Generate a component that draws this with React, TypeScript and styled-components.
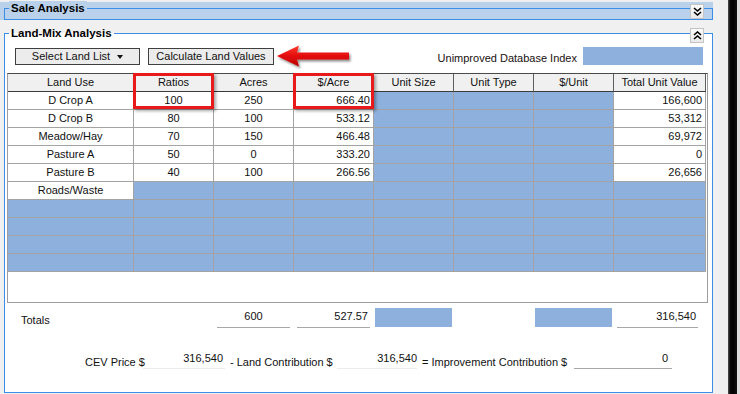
import React from "react";
import styled, { createGlobalStyle } from "styled-components";

const GlobalStyle = createGlobalStyle`
  html, body {
    margin: 0;
    padding: 0;
    background: #f0f0f0;
    overflow: hidden;
  }
  body {
    font-family: "Liberation Sans", Arial, sans-serif;
    font-size: 11px;
    color: #111;
  }
  * { box-sizing: border-box; }
`;

const Page = styled.div`
  display: flex;
  width: 100vw;
  height: 100vh;
  overflow: hidden;
  background: #f0f0f0;
`;

const Main = styled.div`
  flex: 0 1 728px;
  min-width: 0;
  display: flex;
  flex-direction: column;
`;

const ShadowEdge = styled.div`
  flex: none;
  width: 12px;
  display: flex;
`;

const EdgeBlack = styled.div`
  flex: 1;
  background: linear-gradient(to right, #555 0px, #0a0a0a 2px, #000 5px, #111 100%);
`;

const EdgeLight = styled.div`
  width: 3px;
  flex: none;
  background: #dcdcdc;
`;

const SaleBar = styled.div`
  margin-top: 2px;
  width: 713px;
  height: 18px;
  background: #b9d1ea;
  padding: 6px 0 0 4px;
`;

const SaleFrame = styled.div`
  position: relative;
  width: 709px;
  height: 12px;
  border: 1px solid #3c8de6;
`;

const Legend = styled.span<{ $bg: string }>`
  position: absolute;
  top: -8px;
  left: 4px;
  padding: 0 2px;
  font-weight: bold;
  font-size: 11.5px;
  line-height: 14px;
  color: #000;
  background: ${(p) => p.$bg};
`;

const Collapser = styled.div<{ $top: number }>`
  position: absolute;
  top: ${(p) => p.$top}px;
  right: 8px;
  width: 14px;
  height: 15px;
  border: 1px solid #c4c4c4;
  background: linear-gradient(#fbfbfb, #e9e9e9);
  display: flex;
  align-items: center;
  justify-content: center;
`;

const LandFrame = styled.div`
  position: relative;
  margin: 13px 0 0 4px;
  width: 709px;
  height: 360px;
  flex: none;
  border: 1px solid #3c8de6;
  background: #fff;
  display: flex;
  flex-direction: column;
`;

const Toolbar = styled.div`
  margin-top: 13px;
  height: 18px;
  padding: 0 9px 0 10px;
  display: flex;
  align-items: center;
`;

const ToolButton = styled.div<{ $w: number; $gap: number }>`
  width: ${(p) => p.$w}px;
  height: 17px;
  margin-left: ${(p) => p.$gap}px;
  border: 1px solid #3f3f3f;
  background: #ececec;
  display: flex;
  align-items: center;
  justify-content: center;
  gap: 7px;
  font-size: 11px;
  color: #111;
  white-space: nowrap;
`;

const Caret = styled.span`
  width: 0;
  height: 0;
  border-left: 3.5px solid transparent;
  border-right: 3.5px solid transparent;
  border-top: 4px solid #111;
  margin-top: 1px;
`;

const ArrowSvg = styled.svg`
  margin-left: 2px;
  flex: none;
  overflow: visible;
`;

const Spacer = styled.div`
  flex: 1;
`;

const IndexLabel = styled.span`
  align-self: flex-end;
  line-height: 13px;
  margin-right: 6px;
  color: #1a1010;
  white-space: nowrap;
`;

const BlueBox = styled.div<{ $w: number; $h: number }>`
  width: ${(p) => p.$w}px;
  height: ${(p) => p.$h}px;
  background: #8eb0dd;
  flex: none;
`;

const TableWrap = styled.div`
  position: relative;
  margin: 8px 0 0 2px;
  width: 701px;
  height: 230px;
  flex: none;
  border: 1px solid #9c9c9c;
  border-top-color: #4a4a4a;
  background: #fff;
`;

const Grid = styled.div`
  display: grid;
  grid-template-columns: 126px 80px 80px 80px 80px 80px 80px 92px;
  grid-auto-rows: 18px;
`;

const HeadCell = styled.div`
  background: #f0f0f0;
  border-right: 1px solid #5e5e5e;
  border-bottom: 1px solid #3a3a3a;
  display: flex;
  align-items: center;
  justify-content: center;
  line-height: 17px;
  color: #111;
  white-space: nowrap;
`;

const Cell = styled.div<{ $blue?: boolean; $align: "center" | "right" }>`
  background: ${(p) => (p.$blue ? "#8eb0dd" : "#fff")};
  border-right: 1px solid #a3a3a3;
  border-bottom: 1px solid #a3a3a3;
  display: flex;
  align-items: center;
  justify-content: ${(p) => (p.$align === "right" ? "flex-end" : "center")};
  padding-right: ${(p) => (p.$align === "right" ? "3px" : "0")};
  line-height: 17px;
  color: #111;
  white-space: nowrap;
`;

const Highlight = styled.div<{ $left: number }>`
  position: absolute;
  top: -1px;
  left: ${(p) => p.$left}px;
  width: 81px;
  height: 36px;
  border: 3px solid #e8191b;
  box-shadow: 2px 2px 3px rgba(0, 0, 0, 0.35);
  pointer-events: none;
`;

const TotalsRow = styled.div`
  margin-top: 5px;
  height: 20px;
  padding-left: 16px;
  display: flex;
  align-items: stretch;
`;

const TotalsLabel = styled.span`
  width: 196px;
  display: flex;
  align-items: flex-end;
  padding-bottom: 2px;
  color: #111;
`;

const Field = styled.div<{
  $w: number;
  $gap: number;
  $line: string;
  $align: "center" | "right";
  $pad: number;
}>`
  width: ${(p) => p.$w}px;
  margin-left: ${(p) => p.$gap}px;
  border-bottom: 1px solid ${(p) => p.$line};
  display: flex;
  align-items: center;
  justify-content: ${(p) => (p.$align === "right" ? "flex-end" : "center")};
  padding-right: ${(p) => p.$pad}px;
  padding-bottom: 3px;
  color: #111;
  flex: none;
  white-space: nowrap;
`;

const TotalsBlue = styled.div<{ $gap: number }>`
  width: 77px;
  height: 19px;
  margin-left: ${(p) => p.$gap}px;
  background: #8eb0dd;
  flex: none;
`;

const CevRow = styled.div`
  margin-top: 23px;
  height: 18px;
  padding-left: 80px;
  display: flex;
  align-items: stretch;
`;

const CevLabel = styled.span<{ $w: number; $gap: number }>`
  width: ${(p) => p.$w}px;
  margin-left: ${(p) => p.$gap}px;
  display: flex;
  align-items: flex-end;
  line-height: 13px;
  color: #111;
  white-space: nowrap;
  flex: none;
`;

const chevronDown = (
  <svg width="9" height="9" viewBox="0 0 9 9">
    <polyline points="1,1 4.5,4 8,1" fill="none" stroke="#000" strokeWidth="1.6" />
    <polyline points="1,5 4.5,8 8,5" fill="none" stroke="#000" strokeWidth="1.6" />
  </svg>
);

const chevronUp = (
  <svg width="9" height="9" viewBox="0 0 9 9">
    <polyline points="1,4 4.5,1 8,4" fill="none" stroke="#000" strokeWidth="1.6" />
    <polyline points="1,8 4.5,5 8,8" fill="none" stroke="#000" strokeWidth="1.6" />
  </svg>
);

type Row = {
  use: string;
  ratio?: string;
  acres?: string;
  per?: string;
  total?: string;
  kind: "data" | "roads" | "empty";
};

const rows: Row[] = [
  { use: "D Crop A", ratio: "100", acres: "250", per: "666.40", total: "166,600", kind: "data" },
  { use: "D Crop B", ratio: "80", acres: "100", per: "533.12", total: "53,312", kind: "data" },
  { use: "Meadow/Hay", ratio: "70", acres: "150", per: "466.48", total: "69,972", kind: "data" },
  { use: "Pasture A", ratio: "50", acres: "0", per: "333.20", total: "0", kind: "data" },
  { use: "Pasture B", ratio: "40", acres: "100", per: "266.56", total: "26,656", kind: "data" },
  { use: "Roads/Waste", kind: "roads" },
  { use: "", kind: "empty" },
  { use: "", kind: "empty" },
  { use: "", kind: "empty" },
  { use: "", kind: "empty" },
];

const headers = ["Land Use", "Ratios", "Acres", "$/Acre", "Unit Size", "Unit Type", "$/Unit", "Total Unit Value"];

function TableRow({ r }: { r: Row }) {
  const data = r.kind === "data";
  const empty = r.kind === "empty";
  return (
    <>
      <Cell $align="center" $blue={empty}>{r.use}</Cell>
      <Cell $align="center" $blue={!data}>{r.ratio}</Cell>
      <Cell $align="center" $blue={!data}>{r.acres}</Cell>
      <Cell $align="right" $blue={!data}>{r.per}</Cell>
      <Cell $align="center" $blue />
      <Cell $align="center" $blue />
      <Cell $align="center" $blue />
      <Cell $align="right" $blue={!data}>{r.total}</Cell>
    </>
  );
}

export default function App() {
  return (
    <>
      <GlobalStyle />
      <Page>
        <Main>
          <SaleBar>
            <SaleFrame>
              <Legend $bg="#b9d1ea">Sale Analysis</Legend>
              <Collapser $top={-5}>{chevronDown}</Collapser>
            </SaleFrame>
          </SaleBar>

          <LandFrame>
            <Legend $bg="linear-gradient(#f0f0f0 50%, #ffffff 50%)">Land-Mix Analysis</Legend>
            <Collapser $top={-6}>{chevronUp}</Collapser>

            <Toolbar>
              <ToolButton $w={125} $gap={0}>
                Select Land List <Caret />
              </ToolButton>
              <ToolButton $w={126} $gap={8}>Calculate Land Values</ToolButton>
              <ArrowSvg width="78" height="24" viewBox="0 0 78 24">
                <defs>
                  <linearGradient id="arrowFill" x1="0" y1="0" x2="0" y2="1">
                    <stop offset="0" stopColor="#ff3a2e" />
                    <stop offset="0.5" stopColor="#e30d0d" />
                    <stop offset="1" stopColor="#b80000" />
                  </linearGradient>
                  <filter id="arrowShadow" x="-10%" y="-30%" width="130%" height="170%">
                    <feDropShadow dx="1.5" dy="2" stdDeviation="1.2" floodColor="#000" floodOpacity="0.45" />
                  </filter>
                </defs>
                <path
                  d="M1 12 L23 1.5 L21 8.5 L73 8.5 L73 15.5 L21 15.5 L23 22.5 Z"
                  fill="url(#arrowFill)"
                  filter="url(#arrowShadow)"
                />
              </ArrowSvg>
              <Spacer />
              <IndexLabel>Unimproved Database Index</IndexLabel>
              <BlueBox $w={120} $h={18} />
            </Toolbar>

            <TableWrap>
              <Grid>
                {headers.map((h) => (
                  <HeadCell key={h}>{h}</HeadCell>
                ))}
                {rows.map((r, i) => (
                  <TableRow key={i} r={r} />
                ))}
              </Grid>
              <Highlight $left={125} />
              <Highlight $left={285} />
            </TableWrap>

            <TotalsRow>
              <TotalsLabel>Totals</TotalsLabel>
              <Field $w={73} $gap={0} $line="#a8a8a8" $align="center" $pad={0}>600</Field>
              <Field $w={73} $gap={7} $line="#a8a8a8" $align="right" $pad={2}>527.57</Field>
              <TotalsBlue $gap={5} />
              <TotalsBlue $gap={83} />
              <Field $w={81} $gap={5} $line="#a8a8a8" $align="right" $pad={2}>316,540</Field>
            </TotalsRow>

            <CevRow>
              <CevLabel $w={58} $gap={0}>CEV Price $</CevLabel>
              <Field $w={82} $gap={0} $line="#ececec" $align="right" $pad={2}>316,540</Field>
              <CevLabel $w={101} $gap={5}>- Land Contribution $</CevLabel>
              <Field $w={80} $gap={6} $line="#ececec" $align="right" $pad={0}>316,540</Field>
              <CevLabel $w={146} $gap={5}>= Improvement Contribution $</CevLabel>
              <Field $w={98} $gap={6} $line="#a8a8a8" $align="right" $pad={4}>0</Field>
            </CevRow>
          </LandFrame>
        </Main>
        <ShadowEdge>
          <EdgeBlack />
          <EdgeLight />
        </ShadowEdge>
      </Page>
    </>
  );
}
